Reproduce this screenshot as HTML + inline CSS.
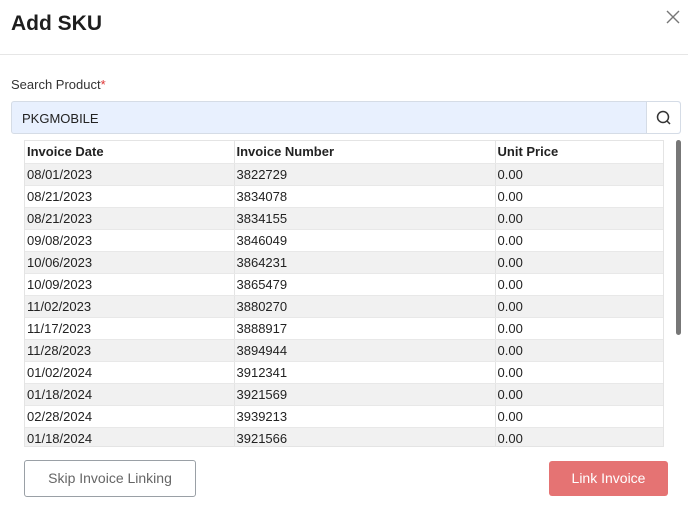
<!DOCTYPE html>
<html><head><style>
*{box-sizing:border-box;margin:0;padding:0}
body{width:688px;height:514px;background:#fff;font-family:"Liberation Sans",sans-serif;position:relative;overflow:hidden;color:#222}
.h{position:absolute;left:11px;top:12px;font-size:21px;font-weight:bold;color:#1e1e1e}
.x{position:absolute;left:664px;top:8px}
.hr{position:absolute;left:0;top:54px;width:688px;height:1px;background:#e6e6e6}
.lbl{position:absolute;left:11px;top:77px;font-size:13px;color:#333}
.lbl span{color:#d33}
.inp{position:absolute;left:11px;top:101px;width:670px;height:33px;border:1px solid #d5dce6;border-radius:3px;background:#e8f0fe}
.inp .t{position:absolute;left:10px;top:9px;font-size:13px;color:#222}
.inp .b{position:absolute;right:0;top:0;width:34px;height:31px;background:#fff;border-left:1px solid #d5dce6;border-radius:0 3px 3px 0}
.tw{position:absolute;left:24px;top:140px;width:640px;height:307px;overflow:hidden;border:1px solid #e4e4e4}
table{border-collapse:collapse;width:639px;font-size:13px}
td,th{height:22px;padding:0 2px;text-align:left;border-right:1px solid #e4e4e4;border-bottom:1px solid #e8e8e8;white-space:nowrap}
th{font-weight:bold;background:#fff}
tr:nth-child(even) td{background:#f1f1f1}
.sb{position:absolute;left:676px;top:140px;width:5px;height:195px;background:#777;border-radius:3px}
.skip{position:absolute;left:24px;top:460px;width:172px;height:37px;border:1px solid #9aa0a6;border-radius:3px;font-size:14px;color:#666;text-align:center;line-height:35px}
.link{position:absolute;left:549px;top:461px;width:119px;height:35px;background:#e57373;border-radius:3px;font-size:14px;color:#fff;text-align:center;line-height:35px}
</style></head><body>
<div class="h">Add SKU</div>
<svg class="x" width="18" height="18" viewBox="0 0 18 18"><path d="M3 3L15 15M15 3L3 15" stroke="#777" stroke-width="1.4"/></svg>
<div class="hr"></div>
<div class="lbl">Search Product<span>*</span></div>
<div class="inp"><div class="t">PKGMOBILE</div><div class="b"><svg width="34" height="31" viewBox="0 0 34 31"><circle cx="16" cy="15" r="5.5" fill="none" stroke="#333" stroke-width="1.5"/><path d="M20 19L23 22" stroke="#333" stroke-width="1.5"/></svg></div></div>
<div class="tw"><table>
<tr><th style="width:209px">Invoice Date</th><th style="width:261px">Invoice Number</th><th>Unit Price</th></tr>
<tr><td>08/01/2023</td><td>3822729</td><td>0.00</td></tr>
<tr><td>08/21/2023</td><td>3834078</td><td>0.00</td></tr>
<tr><td>08/21/2023</td><td>3834155</td><td>0.00</td></tr>
<tr><td>09/08/2023</td><td>3846049</td><td>0.00</td></tr>
<tr><td>10/06/2023</td><td>3864231</td><td>0.00</td></tr>
<tr><td>10/09/2023</td><td>3865479</td><td>0.00</td></tr>
<tr><td>11/02/2023</td><td>3880270</td><td>0.00</td></tr>
<tr><td>11/17/2023</td><td>3888917</td><td>0.00</td></tr>
<tr><td>11/28/2023</td><td>3894944</td><td>0.00</td></tr>
<tr><td>01/02/2024</td><td>3912341</td><td>0.00</td></tr>
<tr><td>01/18/2024</td><td>3921569</td><td>0.00</td></tr>
<tr><td>02/28/2024</td><td>3939213</td><td>0.00</td></tr>
<tr><td>01/18/2024</td><td>3921566</td><td>0.00</td></tr>
</table></div>
<div class="sb"></div>
<div class="skip">Skip Invoice Linking</div>
<div class="link">Link Invoice</div>
</body></html>
